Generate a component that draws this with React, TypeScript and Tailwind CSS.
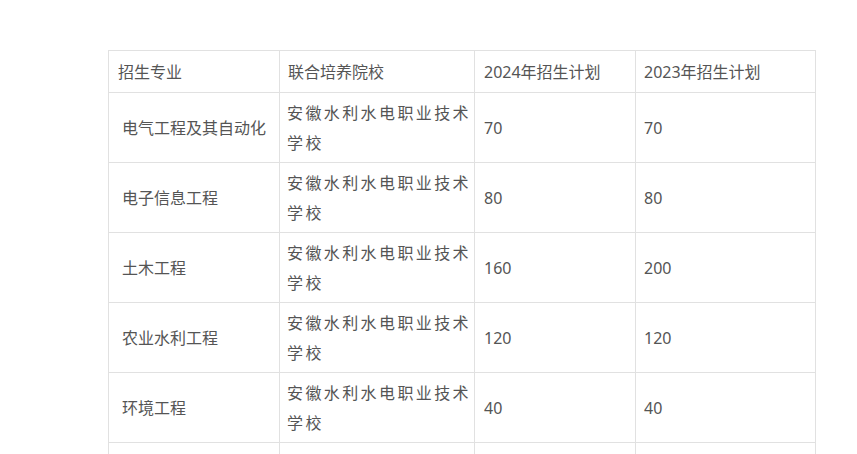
const rows = [
  { major: "电气工程及其自动化", y2024: "70", y2023: "70" },
  { major: "电子信息工程", y2024: "80", y2023: "80" },
  { major: "土木工程", y2024: "160", y2023: "200" },
  { major: "农业水利工程", y2024: "120", y2023: "120" },
  { major: "环境工程", y2024: "40", y2023: "40" },
];

const cell = "border border-[#e1e1e1] align-middle text-left font-normal p-0";

export default function App() {
  return (
    <div
      className="min-h-screen bg-white text-[16px] leading-[30px] text-[#555]"
      style={{ fontFamily: '"Noto Sans", "Noto Sans CJK SC", sans-serif' }}
    >
      <div className="pt-[50px] pl-[108px]">
        <table className="table-fixed border-collapse w-[707px]">
          <colgroup>
            <col className="w-[171px]" />
            <col className="w-[195px]" />
            <col className="w-[161px]" />
            <col className="w-[180px]" />
          </colgroup>
          <thead>
            <tr className="h-[42px]">
              <th className={`${cell} pl-[9px]`}>招生专业</th>
              <th className={`${cell} pl-[8px]`}>联合培养院校</th>
              <th className={`${cell} pl-[9px]`}>2024年招生计划</th>
              <th className={`${cell} pl-[8px]`}>2023年招生计划</th>
            </tr>
          </thead>
          <tbody>
            {rows.map((r) => (
              <tr key={r.major} className="h-[70px]">
                <td className={`${cell} pl-[13px]`}>{r.major}</td>
                <td className={`${cell} pl-[7px] pr-[2px] tracking-[2.4px]`}>
                  安徽水利水电职业技术学校
                </td>
                <td className={`${cell} pl-[9px]`}>{r.y2024}</td>
                <td className={`${cell} pl-[8px]`}>{r.y2023}</td>
              </tr>
            ))}
            <tr className="h-[70px]">
              <td className={cell}></td>
              <td className={cell}></td>
              <td className={cell}></td>
              <td className={cell}></td>
            </tr>
          </tbody>
        </table>
      </div>
    </div>
  );
}
